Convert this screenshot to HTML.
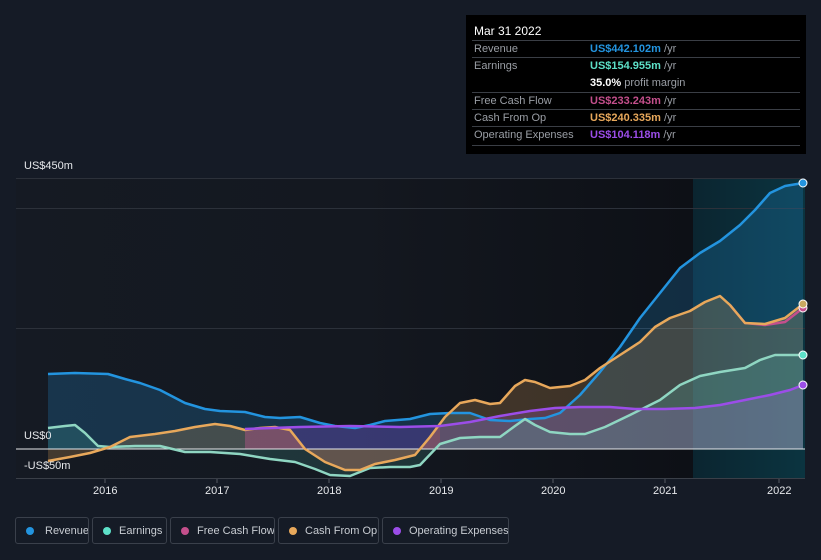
<!DOCTYPE html>
<html style="width:821px;height:560px;overflow:hidden"><head><style>
body{margin:0;width:821px;height:560px;background:#151b26;font-family:"Liberation Sans",sans-serif;overflow:hidden;position:relative}
.tt{position:absolute;left:466px;top:15px;width:340px;height:139px;background:#000;color:#fff;font-size:11px}
.tt .h{position:absolute;left:8px;top:9px;font-size:12px}
.row{position:absolute;left:6px;width:328px;height:17px;border-top:1px solid #3a3e45}
.row span{position:absolute;top:2px;white-space:nowrap}
.l{left:2px;color:#9a9ea5}
.v{left:118px;color:#9a9ea5}
.leg{position:absolute;top:517px;height:27px;border:1px solid #3a404b;border-radius:3px;color:#c8ccd2;font-size:11px;line-height:26px;box-sizing:border-box;white-space:nowrap;overflow:hidden}
.leg i{position:absolute;left:10px;top:9px;width:8px;height:8px;border-radius:50%}
.leg span{position:absolute;left:26px;top:0}
.ax{position:absolute;color:#e6e8eb;font-size:11px}
</style></head><body>
<svg width="821" height="560" style="position:absolute;left:0;top:0">
<defs>
<linearGradient id="hl" x1="0" x2="1"><stop offset="0" stop-color="#0b2530"/><stop offset="1" stop-color="#0b3440"/></linearGradient>
<linearGradient id="pl" x1="0" x2="1"><stop offset="0" stop-color="#151a23"/><stop offset="0.5" stop-color="#141820"/><stop offset="1" stop-color="#0d1016"/></linearGradient>
</defs>
<rect x="16" y="178" width="677" height="300" fill="url(#pl)"/>
<rect x="693" y="178" width="112" height="300" fill="url(#hl)"/>
<g stroke="#2c313a" stroke-width="1">
<line x1="16" y1="178.5" x2="805" y2="178.5"/><line x1="16" y1="208.5" x2="805" y2="208.5"/><line x1="16" y1="328.5" x2="805" y2="328.5"/><line x1="16" y1="478.5" x2="805" y2="478.5" stroke="#3a3f48"/>
</g>
<path d="M48,374 L75,373 108,374 125,379 140,383 160,390 185,403 205,409 220,411 245,412 265,417 280,418 300,417 320,423 335,426 355,428 370,425 385,421 410,419 430,414 450,413 470,413 490,420 510,421 530,419 545,418 560,413 580,395 600,372 620,347 640,318 660,293 680,268 700,253 720,241 740,225 755,210 770,193 785,186 803,183 L803,449 48,449Z" fill="#2394df" fill-opacity="0.22"/>
<path d="M245,429 L300,427 350,426 400,427 440,426 470,422 500,416 530,411 555,408 580,407 610,407 635,409 665,409 695,408 720,405 745,400 770,395 790,390 803,385 L803,449 245,449Z" fill="#9b4de8" fill-opacity="0.25"/>
<path d="M48,461 L70,457 90,453 110,447 130,437 155,434 175,431 195,427 215,424 230,426 245,430 260,428 275,427 290,430 305,449 325,462 345,470 360,470 375,464 395,460 415,455 430,437 445,417 460,403 475,400 490,404 500,403 515,386 525,380 535,382 550,388 570,386 585,380 600,368 620,355 640,342 655,327 670,318 690,311 705,302 720,296 730,305 745,323 765,324 785,318 803,304 L803,449 48,449Z" fill="#e8a85b" fill-opacity="0.22"/>
<path d="M245,430 L260,428 275,427 290,430 305,449 325,462 345,470 360,470 375,464 395,460 415,455 430,437 440,425 L440,449 245,449Z" fill="#c44f5c" fill-opacity="0.25"/>
<path d="M48,428 L65,426 75,425 85,433 98,446 110,447 135,446 160,446 185,452 210,452 240,454 270,459 295,462 315,469 330,475 350,476 370,468 390,467 410,467 420,465 440,444 460,438 480,437 500,437 515,426 525,419 535,425 550,432 570,434 585,434 605,427 630,415 660,400 680,385 700,376 720,372 745,368 760,360 775,355 803,355 L803,449 48,449Z" fill="#5de0c8" fill-opacity="0.15"/>
<line x1="16" y1="449" x2="805" y2="449" stroke="#e6e8eb" stroke-width="1"/>
<g fill="none" stroke-width="2.5" stroke-linejoin="round">
<path d="M48,374 L75,373 108,374 125,379 140,383 160,390 185,403 205,409 220,411 245,412 265,417 280,418 300,417 320,423 335,426 355,428 370,425 385,421 410,419 430,414 450,413 470,413 490,420 510,421 530,419 545,418 560,413 580,395 600,372 620,347 640,318 660,293 680,268 700,253 720,241 740,225 755,210 770,193 785,186 803,183" stroke="#2394df"/>
<path d="M48,428 L65,426 75,425 85,433 98,446 110,447 135,446 160,446 185,452 210,452 240,454 270,459 295,462 315,469 330,475 350,476 370,468 390,467 410,467 420,465 440,444 460,438 480,437 500,437 515,426 525,419 535,425 550,432 570,434 585,434 605,427 630,415 660,400 680,385 700,376 720,372 745,368 760,360 775,355 803,355" stroke="#8fd6c2"/>
<path d="M730,305 745,323 765,325 785,322 803,308" stroke="#c44f8c"/>
<path d="M48,461 L70,457 90,453 110,447 130,437 155,434 175,431 195,427 215,424 230,426 245,430 260,428 275,427 290,430 305,449 325,462 345,470 360,470 375,464 395,460 415,455 430,437 445,417 460,403 475,400 490,404 500,403 515,386 525,380 535,382 550,388 570,386 585,380 600,368 620,355 640,342 655,327 670,318 690,311 705,302 720,296 730,305 745,323 765,324 785,318 803,304" stroke="#e8a85b"/>
<path d="M245,429 L300,427 350,426 400,427 440,426 470,422 500,416 530,411 555,408 580,407 610,407 635,409 665,409 695,408 720,405 745,400 770,395 790,390 803,385" stroke="#9b4de8"/>
</g>
<g stroke="#fff" stroke-width="1">
<circle cx="803" cy="183" r="4" fill="#2394df"/><circle cx="803" cy="308" r="4" fill="#c44f8c"/><circle cx="803" cy="304" r="4" fill="#c9a860"/><circle cx="803" cy="355" r="4" fill="#5de0c8"/><circle cx="803" cy="385" r="4" fill="#9b4de8"/>
</g>
<g stroke="#555a63"><line x1="105" y1="479" x2="105" y2="483"/><line x1="217" y1="479" x2="217" y2="483"/><line x1="329" y1="479" x2="329" y2="483"/><line x1="441" y1="479" x2="441" y2="483"/><line x1="553" y1="479" x2="553" y2="483"/><line x1="665" y1="479" x2="665" y2="483"/><line x1="779" y1="479" x2="779" y2="483"/></g>
</svg>
<div class="ax" style="left:24px;top:160px">US$450m</div>
<div class="ax" style="left:24px;top:430px">US$0</div>
<div class="ax" style="left:24px;top:460px">-US$50m</div>
<div class="ax" style="left:93px;top:485px">2016</div>
<div class="ax" style="left:205px;top:485px">2017</div>
<div class="ax" style="left:317px;top:485px">2018</div>
<div class="ax" style="left:429px;top:485px">2019</div>
<div class="ax" style="left:541px;top:485px">2020</div>
<div class="ax" style="left:653px;top:485px">2021</div>
<div class="ax" style="left:767px;top:485px">2022</div>
<div class="tt">
<div class="h">Mar 31 2022</div>
<div class="row" style="top:25px"><span class="l">Revenue</span><span class="v"><b style="color:#2394df">US$442.102m</b> /yr</span></div>
<div class="row" style="top:42px;height:34px"><span class="l">Earnings</span><span class="v"><b style="color:#5de0c8">US$154.955m</b> /yr</span><span class="v" style="top:19px"><b style="color:#fff">35.0%</b> profit margin</span></div>
<div class="row" style="top:77px"><span class="l">Free Cash Flow</span><span class="v"><b style="color:#c44f8c">US$233.243m</b> /yr</span></div>
<div class="row" style="top:94px"><span class="l">Cash From Op</span><span class="v"><b style="color:#e8a85b">US$240.335m</b> /yr</span></div>
<div class="row" style="top:111px"><span class="l">Operating Expenses</span><span class="v"><b style="color:#9b4de8">US$104.118m</b> /yr</span></div>
<div class="row" style="top:130px;height:0"></div>
</div>
<div class="leg" style="left:15px;width:74px"><i style="background:#2394df"></i><span style="left:29px">Revenue</span></div>
<div class="leg" style="left:92px;width:75px"><i style="background:#5de0c8"></i><span>Earnings</span></div>
<div class="leg" style="left:170px;width:105px"><i style="background:#c44f8c"></i><span>Free Cash Flow</span></div>
<div class="leg" style="left:278px;width:101px"><i style="background:#e8a85b"></i><span>Cash From Op</span></div>
<div class="leg" style="left:382px;width:127px"><i style="background:#9b4de8"></i><span>Operating Expenses</span></div>
</body></html>
